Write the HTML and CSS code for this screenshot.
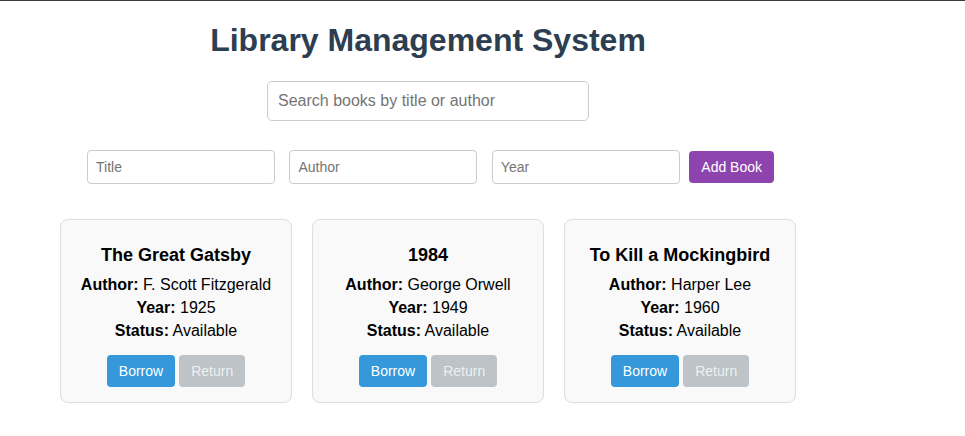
FILE: index.html
```html
<!DOCTYPE html>
<html lang="en">
<head>
<meta charset="UTF-8">
<title>Library Management System</title>
<link rel="stylesheet" href="styles.css">
</head>
<body>
<div class="container">
  <h1 class="page-title">Library Management System</h1>
  <div class="search-bar">
    <input class="search-input" type="text" placeholder="Search books by title or author">
  </div>
  <form class="add-form">
    <input class="field" type="text" placeholder="Title">
    <input class="field" type="text" placeholder="Author">
    <input class="field" type="text" placeholder="Year">
    <button class="add-btn" type="button">Add Book</button>
  </form>
  <div class="book-list">
    <div class="book-card">
      <h3 class="book-title">The Great Gatsby</h3>
      <p class="book-info"><strong>Author:</strong> F. Scott Fitzgerald</p>
      <p class="book-info"><strong>Year:</strong> 1925</p>
      <p class="book-info"><strong>Status:</strong> Available</p>
      <div class="actions">
        <button class="btn btn-borrow" type="button">Borrow</button>
        <button class="btn btn-return" type="button" disabled>Return</button>
      </div>
    </div>
    <div class="book-card">
      <h3 class="book-title">1984</h3>
      <p class="book-info"><strong>Author:</strong> George Orwell</p>
      <p class="book-info"><strong>Year:</strong> 1949</p>
      <p class="book-info"><strong>Status:</strong> Available</p>
      <div class="actions">
        <button class="btn btn-borrow" type="button">Borrow</button>
        <button class="btn btn-return" type="button" disabled>Return</button>
      </div>
    </div>
    <div class="book-card">
      <h3 class="book-title">To Kill a Mockingbird</h3>
      <p class="book-info"><strong>Author:</strong> Harper Lee</p>
      <p class="book-info"><strong>Year:</strong> 1960</p>
      <p class="book-info"><strong>Status:</strong> Available</p>
      <div class="actions">
        <button class="btn btn-borrow" type="button">Borrow</button>
        <button class="btn btn-return" type="button" disabled>Return</button>
      </div>
    </div>
  </div>
</div>
</body>
</html>
```

FILE: styles.css
```css
html {
  border-top: 1px solid #3a3a3a;
}

body {
  margin: 0 8px 8px;
  font-family: "Liberation Sans", Arial, sans-serif;
  font-size: 16px;
  color: #000;
  background: #fff;
}

.container {
  width: 840px;
}

.page-title {
  font-size: 32px;
  font-weight: bold;
  color: #2c3e50;
  text-align: center;
  margin: 21.44px 0;
}

.search-bar {
  display: flex;
  justify-content: center;
  margin-bottom: 24px;
}

.search-input {
  width: 300px;
  padding: 10px;
  border: 1px solid #ccc;
  border-radius: 5px;
  font-family: inherit;
  font-size: 16px;
  line-height: 18px;
  color: #333;
}

.search-input::placeholder {
  color: #757575;
}

.add-form {
  display: flex;
  justify-content: center;
  align-items: center;
  gap: 4.45px;
  margin: 0 0 20px;
}

.field {
  width: 170px;
  padding: 8px;
  margin: 5px;
  border: 1px solid #ccc;
  border-radius: 4px;
  font-family: inherit;
  font-size: 14px;
  line-height: 16px;
}

.field::placeholder {
  color: #757575;
}

.add-btn {
  padding: 8px 12px;
  border: none;
  border-radius: 4px;
  background: #8e44ad;
  color: #fff;
  font-family: inherit;
  font-size: 14px;
  line-height: 16px;
}

.book-list {
  display: flex;
  flex-wrap: wrap;
  justify-content: center;
}

.book-card {
  width: 200px;
  margin: 10px;
  padding: 15px;
  background: #f9f9f9;
  border: 1px solid #ddd;
  border-radius: 8px;
  text-align: center;
}

.book-title {
  font-size: 18px;
  margin: 10px 0;
}

.book-info {
  margin: 5px 0;
}

.actions {
  display: flex;
  justify-content: center;
  gap: 4px;
  margin-top: 15px;
}

.btn {
  padding: 8px 12px;
  border: none;
  border-radius: 4px;
  font-family: inherit;
  font-size: 14px;
  line-height: 16px;
  color: #fff;
}

.btn-borrow {
  background: #3498db;
}

.btn-return {
  background: #bdc3c7;
  color: #ecf0f1;
}
```
